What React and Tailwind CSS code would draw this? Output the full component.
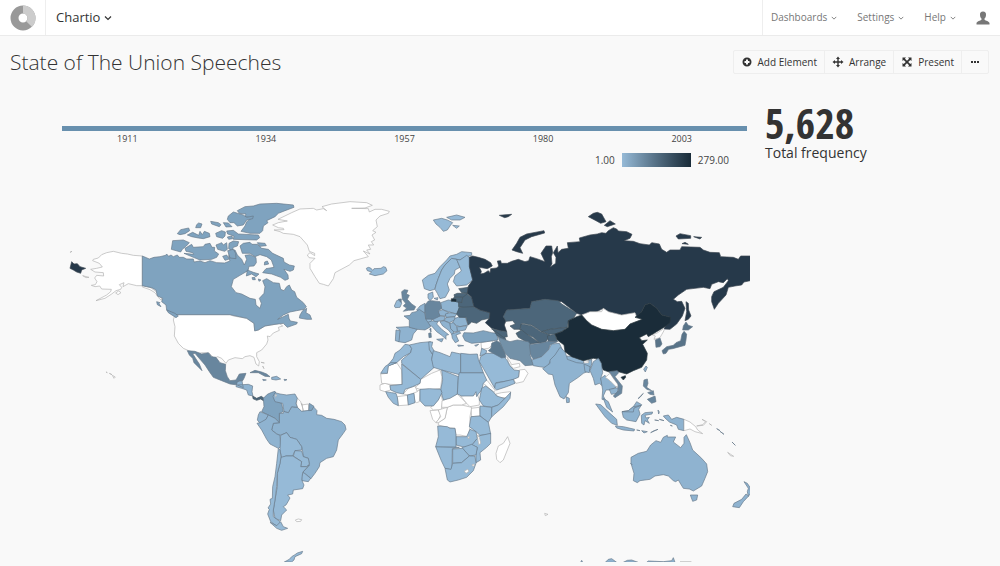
import React from "react";

const LIGHT = "#96bad7";
const SOFT = "#8fb3d0";
const MID = "#7fa3bf";
const STEEL = "#68869e";
const SLATE = "#4c667a";
const NAVY = "#26394a";
const INK = "#1a2c39";
const NONE = "#ffffff";

const borders = {
  [NONE]: "#b0b0b0",
  [NAVY]: "#3b4650",
  [INK]: "#2c3940",
  [SLATE]: "#44545f",
};

// Each region holds [fill, outline, outline, ...]; outlines are in thirds of a map unit from the origin.
const regions = [
  {
    origin: [50, 190],
    shapes: [
      [NONE,
        "277,198 250,196 232,192 215,190 190,184 170,188 155,194 145,204 130,208 128,212 148,220 157,231 140,235 122,238 135,246 160,248 161,258 140,256 134,264 141,275 136,284 124,286 135,290 149,288 155,297 184,298 182,305 170,315 138,332 165,325 185,312 198,302 212,298 215,292 208,284 222,278 219,290 235,281 260,287 277,287 300,292 315,302 330,315 337,330 330,328 315,308 300,299 277,291",
        "197,309 206,303 213,308 204,314", "98,257 117,262 108,263", "60,187 66,184", "168,546 172,548", "178,550 186,554", "187,556 196,561 192,565"],
      [NAVY, "65,215 72,222 82,221 90,230 107,235 95,240 92,250 80,246 70,240 60,235"],
    ],
  },
  {
    origin: [150, 190],
    shapes: [
      [NONE,
        "75,374 240,374 250,378 290,385 312,400 314,420 325,420 345,408 375,403 388,400 398,408 385,412 388,421 370,429 360,440 352,438 354,450 350,462 335,480 320,488 320,500 328,515 326,528 318,522 312,502 300,497 285,500 277,506 255,503 235,510 228,520 215,505 203,500 192,505 178,490 160,488 140,490 118,483 100,475 85,460 73,438 75,410 70,390",
        "368,105 385,98 412,93 384,88 425,68 450,57 490,55 500,60 520,56 530,62 516,50 545,42 600,35 650,38 667,46 645,54 605,55 655,56 658,66 675,58 695,58 718,64 715,70 690,78 678,90 682,110 668,122 678,127 666,135 674,150 664,155 671,165 655,165 662,178 650,180 660,192 640,183 655,200 612,212 598,225 555,248 550,266 535,288 520,283 508,280 495,260 480,235 480,220 495,205 477,203 472,195 480,188 494,197 494,190 478,184 472,165 450,140 430,133 400,130 390,125 372,120 402,119 400,115 385,113",
        "333,517 343,519", "338,528 342,536"],
      [MID,
        "-23,198 -2,207 12,202 30,200 47,196 50,192 56,199 63,195 70,200 82,195 88,202 100,202 110,207 130,207 132,216 150,213 165,218 180,212 200,218 224,219 240,213 236,200 240,180 255,180 262,195 275,208 283,225 290,208 285,196 300,194 318,203 319,218 312,228 297,229 294,242 270,256 250,268 244,290 258,308 275,312 300,325 316,328 318,345 330,355 334,340 328,325 342,310 345,290 338,272 350,266 370,278 388,280 392,298 402,302 410,290 418,285 425,300 434,305 440,322 460,338 469,350 462,358 440,362 420,366 400,375 383,388 400,380 415,373 417,385 421,393 442,397 440,402 412,412 400,400 385,402 375,403 345,408 325,420 314,423 312,400 290,385 240,374 75,374 60,365 50,360 48,345 35,335 38,325 22,318 18,300 5,293 -10,290 -23,287",
        "262,62 285,50 310,48 330,42 380,40 430,45 432,52 405,62 385,70 375,80 350,92 354,98 340,108 338,122 330,130 300,130 273,124 285,108 290,95 305,84 285,80 288,72 268,70",
        "235,78 250,66 280,75 290,82 310,78 308,86 290,90 280,105 262,108 252,98 240,98 232,88",
        "230,123 250,121 265,132 325,135 329,143 320,150 250,148 252,138 233,132",
        "197,130 215,122 226,126 225,138 218,145 200,140", "220,98 235,99 246,110 228,111",
        "182,94 205,98 213,104 208,110 185,102", "140,104 146,99 156,102 152,113 137,113",
        "82,131 92,119 116,114 119,122 105,131 90,134", "112,135 128,127 146,136 150,124 157,134 163,124 178,130 180,140 160,146 145,144 125,140",
        "68,152 100,150 118,158 109,168 97,178 92,186 64,178",
        "105,175 125,163 130,172 160,170 165,163 180,160 186,172 194,172 193,183 206,192 200,202 185,208 150,210 130,202 102,190 131,193 128,188 108,184",
        "198,165 208,161 215,158 220,165 230,158 232,178 224,184 203,178", "237,160 250,153 266,155 262,168 250,172 246,182 236,176",
        "233,182 250,178 257,190 258,206 240,204", "218,199 230,195 238,207 225,211", "232,141 246,138 248,146 236,148",
        "270,168 280,160 300,157 306,163 322,163 335,175 355,178 368,190 400,205 402,216 418,225 433,228 430,240 420,244 402,238 414,255 415,267 405,271 392,262 365,252 338,248 348,236 372,232 364,210 350,200 330,194 315,200 300,190 277,190",
        "322,158 345,160 349,167 330,169", "344,216 352,213 356,222 343,225", "292,240 310,247 327,252 318,260 305,252 289,258", "306,263 314,262 316,269 308,269", "325,267 333,270 327,274",
        "450,375 458,362 470,355 468,368 480,375 485,388 470,388 448,384",
        "50,360 75,370 85,378 78,383 55,368", "20,335 30,338 27,341 33,350 22,344"],
      [LIGHT, "649,235 655,232 662,234 668,241 672,236 693,235 700,230 707,232 711,242 700,252 675,257 658,252 665,246 652,242"],
    ],
  },
  {
    origin: [180, 350],
    shapes: [
      [STEEL,
        "22,2 45,4 65,12 85,8 95,20 108,22 120,38 137,43 136,62 142,80 150,92 168,90 178,72 198,70 192,85 188,92 176,93 172,105 150,102 125,92 100,82 88,65 75,45 55,22 45,10 38,11 50,30 58,42 66,62 57,53 42,38 38,25 28,15",
        "210,68 225,61 245,66 260,72 270,80 255,79 235,68"],
      [SLATE, "218,138 230,145 244,139 255,147 250,152 242,147 230,151 219,146"],
      [SOFT, "172,95 186,92 188,104 205,103 218,108 216,125 219,138 205,135 200,120 185,115 168,110", "172,105 188,104 190,113", "275,82 290,79 302,87 288,90 275,88", "248,88 259,90 250,92", "312,88 321,89 314,92"],
      [NONE, "350,142 362,155 365,165 385,162 387,182 365,184 355,178 350,165", "365,160 370,183", "346,510 355,507 365,509 362,514 350,515"],
      [SOFT,
        "298,218 280,220 275,240 290,252 300,256 320,248 330,262 350,268 365,290 368,305 370,320 385,325 388,345 380,355 368,367 385,378 392,387 405,370 418,350 420,338 440,325 460,320 470,300 475,270 490,250 498,238 495,225 485,215 462,208 440,205 425,196 410,194 411,182 400,170 395,180 365,184 352,172 335,170 325,188 312,184 310,190 298,190"],
      [MID, "250,145 262,133 275,127 285,124 288,130 280,138 285,153 305,160 310,185 298,190 298,218 285,205 265,195 245,185 252,170", "388,160 402,169 395,181 386,182"],
      [SOFT,
        "285,128 300,132 320,135 345,132 352,145 348,160 352,172 335,170 325,188 312,184 308,160 285,155 279,140",
        "240,185 265,195 258,210 240,220 232,210 235,195",
        "231,220 240,218 258,208 265,195 285,205 298,218 280,220 275,240 290,252 300,256 302,290 295,295 270,282 260,268 245,240"],
      [LIGHT,
        "302,256 320,248 330,262 350,268 365,290 365,300 345,302 338,318 318,318 305,324 300,300",
        "345,302 365,303 370,320 385,325 388,342 380,350 362,350 365,335 340,318",
        "370,367 392,385 385,395 366,392 365,380",
        "303,322 318,318 338,318 365,335 362,350 380,350 388,345 368,367 365,390 372,405 368,416 340,420 338,432 323,435 330,444 324,455 318,465 310,470 320,480 305,495 302,512 285,505 280,480 285,450 292,410 292,370 300,340",
        "295,295 300,300 303,320 300,340 292,370 290,410 285,450 280,480 280,500 300,515 305,530 290,528 272,515 263,492 268,478 264,474 272,462 270,448 277,445 278,410 285,380 290,340",
        "270,517 290,527 302,515 310,530 323,535 305,541 290,535",
        "313,636 328,628 335,620 345,614 352,609 368,604 365,611 345,620 342,630 335,636"],
      [NONE, "286,132 290,136 286,142"],
    ],
  },
  {
    origin: [370, 320],
    shapes: [
      [NONE,
        "32,162 52,160 55,137 80,128 95,150 95,195 60,193 35,190", "152,178 185,160 210,150 216,170 212,205 178,210 150,208 135,203 150,190",
        "340,190 343,180 352,182 376,212 370,216 350,198", "378,222 395,218 422,215 418,232 385,234", "303,265 328,262 330,288 305,290",
        "205,308 225,295 232,262 250,255 275,255 305,262 300,290 300,320 295,350 270,345 258,345 255,325 232,322 205,315",
        "182,262 205,240 212,218 218,245 215,262 215,270 190,270", "180,272 205,270 212,285 205,300 198,308 188,298", "205,270 232,262 225,295 205,308 198,308 212,290",
        "216,243 262,222 275,235 290,250 275,255 250,255 232,262 215,262", "272,228 322,222 328,240 328,255 300,260 290,250",
        "130,218 150,210 148,245 140,248 135,245", "82,230 112,226 115,255 85,257", "30,195 45,190 60,195 62,210 45,215 30,210", "100,222 115,205 135,198 142,215 115,225",
        "448,150 465,148 474,160 460,185 438,190 430,178 447,170", "412,112 425,134 448,130 450,140 430,145 415,128",
        "378,400 385,378 400,370 413,350 420,370 412,390 400,420 390,428 380,418", "333,68 365,62 372,72 355,85 335,88"],
      [LIGHT,
        "118,75 125,85 122,98 100,110 80,128 52,138 70,115 75,100 90,90 105,73", "80,128 55,138 52,160 32,160 45,140 62,128",
        "118,75 150,68 182,65 178,88 188,104 185,118 195,140 152,178 95,130 95,120 122,98 125,85",
        "95,132 152,178 150,190 128,200 105,208 100,222 80,218 62,210 60,197 97,193",
        "176,66 188,66 185,80 192,92 188,104 178,88",
        "190,92 210,98 220,102 240,110 245,96 272,102 272,165 215,150 190,142 185,118",
        "215,150 265,170 262,222 240,235 220,240 212,210 218,180",
        "268,158 340,158 350,180 340,190 335,210 325,222 320,230 318,215 310,228 275,228 262,222 265,172",
        "335,205 347,198 370,215 380,228 405,236 385,255 365,262 340,258 328,240", "422,217 420,235 400,260 370,286 364,292 365,262 385,255 405,235",
        "330,258 365,262 365,290 355,307 330,288", "303,290 330,288 355,307 362,342 330,346 318,335 298,320",
        "325,348 362,340 362,370 350,382 330,398 332,420 318,428 318,402 322,382 305,375 322,355",
        "258,350 290,350 300,328 318,335 322,355 305,375 285,382 258,375", "276,383 305,373 322,382 318,405 298,408",
        "248,387 278,385 298,408 275,428 248,430", "197,380 268,382 247,386 246,450 225,445 213,420",
        "225,445 243,448 248,430 275,428 298,408 315,408 318,430 310,452 290,472 265,480 240,486 232,480",
        "203,318 232,320 240,325 255,325 258,345 258,381 197,380 205,350",
        "150,208 178,206 212,208 216,218 205,240 190,258 165,258 150,242", "112,225 132,220 135,248 115,255", "47,215 65,218 78,220 82,232 85,257 70,250 55,232",
        "332,110 348,100 375,100 400,108 412,122 420,138 432,150 448,152 445,172 420,182 378,188 374,204 360,180 340,145 328,125",
        "376,190 400,185 430,178 435,190 410,200 380,210 374,205", "330,108 335,85 350,92 348,100"],
      [SOFT, "272,100 300,103 322,102 325,118 340,158 272,158"],
      [NONE, "283,453 293,448 297,454 288,460", "306,434 313,432 312,439 307,438", "293,352 298,349 297,357", "322,345 328,352 332,370 326,374"],
    ],
  },
  {
    origin: [360, 210],
    shapes: [
      [LIGHT,
        "220,30 245,25 262,30 278,38 272,45 262,60 250,64 240,52 228,42", "260,22 290,15 315,22 300,30 275,30", "278,46 298,48 290,55",
        "187,210 205,196 225,190 240,170 260,150 270,138 290,133 305,125 335,128 335,136 315,142 300,150 290,148 275,145 255,165 245,180 235,205 228,225 224,238 210,242 193,236",
        "228,225 235,205 245,180 255,165 275,145 290,148 300,172 285,180 283,192 270,205 262,222 268,240 256,262 240,266 232,250 225,238",
        "300,150 320,136 328,142 330,170 338,210 320,225 290,228 280,215 285,198 304,183 300,172 290,148",
        "204,252 218,246 220,262 210,272 204,264", "222,265 234,263 232,270", "103,288 110,272 122,268 125,280 120,292 106,293",
        "197,327 215,325 215,335 200,338"],
      [SOFT,
        "242,278 265,270 295,275 298,300 290,312 265,305 245,298", "170,300 180,288 195,280 195,308 180,305",
        "108,352 145,350 172,358 160,372 155,390 135,398 115,395 120,360", "108,360 120,362 117,395 106,392",
        "195,340 215,333 235,332 230,342 245,358 266,374 258,376 258,388 248,378 230,365 215,348", "230,388 250,386 245,396",
        "233,305 248,299 266,308 255,318 238,316", "215,326 240,318 256,320 252,331 225,335", "256,312 270,308 290,312 285,320 258,322",
        "252,332 258,323 285,320 285,330 268,338", "285,325 300,320 316,322 324,345 300,350 290,347 278,338", "290,350 300,350 322,347 316,360 292,364",
        "240,335 252,332 270,340 272,356 282,365 278,376 265,360 248,348", "270,340 280,338 290,350 292,364 282,366 272,356", "275,372 298,364 302,370 288,375 296,393 286,398 277,385",
        "293,405 311,407 295,409", "344,406 356,403 348,409"],
      [MID, "132,318 150,316 155,308 168,305 178,298 195,310 197,327 204,337 212,350 195,360 172,358 148,352 148,330", "312,368 340,369 370,362 395,368 410,370 414,390 380,395 355,398 335,400 315,392 308,378"],
      [STEEL, "125,245 133,239 144,241 139,252 148,256 142,268 155,282 167,290 162,300 145,301 130,304 140,294 130,288 137,280 127,268", "115,268 124,267 122,277", "195,285 205,273 215,272 240,275 245,295 235,304 240,318 220,328 197,327 195,305", "206,370 213,368 214,382 207,383", "209,357 213,355 213,366"],
      [SLATE,
        "296,236 325,232 322,250 305,248", "282,254 292,250 322,250 320,262 284,262", "282,262 308,262 306,278 290,276 276,270",
        "308,262 322,252 336,264 342,290 320,294 296,290 296,276 306,278", "298,292 340,290 360,300 390,308 388,325 365,330 350,340 335,336 325,345 318,322 298,322 290,312",
        "400,360 422,366 432,376 438,390 425,388 412,378"],
      [INK, "274,266 288,268 288,274 274,274"],
    ],
  },
  {
    origin: [470, 200],
    shapes: [
      [NAVY,
        "-2,172 8,168 25,172 45,178 62,188 67,198 52,206 28,202 34,214 32,222 42,220 55,212 60,218 62,206 80,204 86,198 82,183 92,182 94,190 112,190 125,184 145,178 165,185 176,182 180,170 200,176 225,185 213,160 228,138 245,138 248,158 244,170 246,192 240,202 257,190 258,172 250,158 262,138 264,158 275,148 295,145 292,128 330,125 328,114 360,105 382,102 395,98 408,100 415,92 430,83 440,87 445,93 470,95 486,103 480,115 462,122 490,124 510,131 538,135 545,128 568,132 575,148 590,157 600,150 630,150 635,140 690,142 700,150 720,157 748,158 752,170 790,172 805,178 812,168 841,168 841,242 822,246 815,255 795,258 775,262 768,285 745,310 733,328 725,305 725,290 732,275 760,262 775,242 772,236 760,248 745,245 725,253 720,266 700,262 650,268 625,285 610,298 622,305 635,304 645,325 637,348 620,372 600,388 582,387 600,352 575,345 560,325 540,310 525,315 515,335 500,350 495,340 460,345 430,345 400,325 380,335 335,345 320,340 275,305 225,298 185,305 180,325 110,330 100,350 108,362 103,375 110,395 90,392 65,385 46,368 58,355 60,338 30,330 12,320 5,292 -8,280 -5,258 8,240 -2,200",
        "126,150 140,130 150,112 170,102 222,92 224,99 185,110 165,120 150,143 158,160 140,155", "355,50 370,40 382,37 395,42 408,65 392,70 378,62", "403,76 420,62 436,72 412,80", "88,46 108,44 125,43 115,50 104,53",
        "618,108 630,101 662,107 662,115 625,117", "671,110 695,112 690,117", "636,131 645,127 655,133", "648,305 655,310 656,330 663,348 655,358 645,362 650,335"],
      [SLATE,
        "100,350 110,330 180,325 185,305 225,298 265,302 275,312 320,340 310,355 295,362 292,382 240,388 215,395 185,375 155,370 150,388 132,388 120,378 136,372 128,362 108,364",
        "150,390 153,372 185,377 212,395 240,405 228,425 210,430 190,412 165,400 155,390", "138,400 155,390 170,402 208,428 180,432 145,412",
        "215,395 240,388 292,382 275,395 255,402 236,403", "232,408 255,402 262,425 235,425", "65,387 90,392 110,395 112,410 100,412 85,400"],
      ["#7391a8", "85,412 100,418 120,425 142,420 175,425 187,442 180,465 190,495 165,497 150,482 120,475 105,460 95,440"],
      ["#5d798f", "65,430 80,422 90,428 105,460 108,472 95,474 55,452 63,445"],
      [STEEL, "178,434 210,430 235,424 262,425 240,435 235,450 215,470 190,478 182,465"],
      [SOFT,
        "190,497 185,480 215,470 235,450 245,432 268,430 278,450 255,470 240,485 232,502 220,502",
        "218,506 240,490 240,480 255,465 270,442 285,455 290,470 320,485 342,488 365,478 365,492 358,512 340,520 325,532 298,550 295,578 282,597 270,590 255,555 248,524 235,522",
        "290,468 305,470 342,482 340,490 320,488 292,478", "342,492 360,500 358,518 345,515", "521,508 528,498 532,502 526,516", "288,590 298,595 298,607 290,608"],
      [NONE, "335,345 360,335 395,335 400,325 415,335 455,345 495,338 500,350 517,358 480,372 465,388 430,392 395,388 365,375 350,362", "342,482 356,484 355,489 342,489", "546,404 560,400 578,388 582,392 575,404 570,413 552,418 556,408"],
      [INK,
        "255,402 275,395 295,382 295,362 320,350 335,345 350,362 365,375 395,388 430,392 465,388 480,372 517,358 495,352 515,335 525,315 540,310 560,325 575,345 602,352 600,368 585,380 560,395 535,410 530,402 508,413 516,422 532,420 518,433 532,460 530,480 515,502 490,512 470,522 462,520 445,515 420,517 400,510 390,495 388,478 370,475 340,482 305,470 285,455 282,435 262,420",
        "453,532 466,527 467,532 460,540"],
      ["#587388", "556,420 570,414 576,432 570,440 558,442", "576,452 590,440 610,436 618,428 632,422 636,403 642,394 650,402 648,420 645,436 630,440 608,446 596,448 588,460 580,462", "640,378 648,366 655,376 668,380 655,390 638,390"],
    ],
  },
  {
    origin: [530, 330],
    shapes: [
      [SOFT,
        "180,122 190,95 205,85 214,100 218,128 212,145 220,170 208,160 195,165 190,145", "212,145 225,136 240,152 258,165 258,172 240,180 228,180 220,198 226,210 216,208 218,180",
        "238,178 265,173 262,190 244,193", "220,205 235,215 245,240 248,246 230,232", "197,222 212,224 240,250 260,268 262,286 245,280 225,260 210,240",
        "256,288 280,290 314,298 312,303 280,300 260,294", "276,245 295,242 310,230 320,215 335,224 326,238 330,252 318,275 290,270 280,262", "276,245 295,242 310,230 334,226 312,234 310,246", "334,256 345,248 368,246 366,252 345,256 348,264 358,262 352,270 358,280 345,272 342,285 335,280",
        "384,240 388,246 386,252", "374,270 386,272", "388,268 402,272", "362,308 372,302 384,298", "335,302 352,305 342,309", "320,300 330,302",
        "400,258 415,255 425,268 440,262 462,268 462,302 445,298 440,285 418,276 405,264", "421,286 427,288",
        "303,382 325,370 350,364 362,345 378,332 392,337 400,322 412,316 412,321 437,321 430,336 452,353 462,340 462,322 469,314 480,338 488,360 515,385 530,402 533,425 525,445 515,468 490,483 478,477 460,475 452,462 445,450 437,455 430,452 415,438 400,434 375,438 360,448 330,452 322,458 310,452 312,430 303,400",
        "481,495 503,495 500,510 488,514", "642,455 652,460 660,472 662,490 655,499 652,485 655,475", "648,492 656,498 640,515 628,533 608,530 612,520 635,508",
        "226,697 235,688 245,686 260,697", "280,697 292,691 305,690 324,697", "350,697 355,693 400,695 425,692 430,683 435,697", "152,697 155,691 158,697"],
      [NONE, "226,142 240,130 252,148 267,168 258,170 240,152", "462,268 480,276 497,290 503,300 518,311 495,305 480,297 462,302", "500,288 518,284 527,275 516,268 530,275 520,286", "593,367 611,379 601,377", "44,550 54,553 46,557", "538,281 545,286", "450,696 484,696"],
      [STEEL, "238,125 262,122 266,128 255,140 277,168 275,190 255,203 250,198 265,182 264,162 248,140", "342,150 352,147 354,160 350,172 365,182 350,178 340,168", "353,188 370,182 372,195 360,193", "352,208 375,198 378,215 365,220", "324,206 340,190 330,202", "560,296 570,302", "570,304 582,313", "606,336 616,346", "302,400 306,404"],
    ],
  },
];

function WorldMap() {
  return (
    <svg viewBox="62 190 688 372" className="block w-full" role="img" aria-label="Frequency by country">
      {regions.map(({ origin, shapes }) => (
        <g key={origin.join("-")} transform={`translate(${origin[0]} ${origin[1]}) scale(0.33333)`}>
          {shapes.map(([fill, ...outlines], i) => (
            <g key={i} fill={fill} stroke={borders[fill] ?? "#66798a"} strokeWidth="2" strokeLinejoin="round">
              {outlines.map((points) => (
                <polygon key={points} points={points} />
              ))}
            </g>
          ))}
        </g>
      ))}
    </svg>
  );
}

function Chevron({ className }) {
  return (
    <svg viewBox="0 0 8 6" className={className} fill="none" stroke="currentColor" strokeWidth="1.2" aria-hidden="true">
      <path d="M1 1.5 4 4.5 7 1.5" />
    </svg>
  );
}

function Logo() {
  return (
    <svg viewBox="0 0 26 26" className="size-[26px]" aria-hidden="true">
      <circle cx="13" cy="13" r="8.5" fill="none" stroke="#999999" strokeWidth="8" />
      <path d="M13 4.5A8.5 8.5 0 0 1 19 19" fill="none" stroke="#cccccc" strokeWidth="8" />
    </svg>
  );
}

const icons = {
  add: (
    <path fillRule="evenodd" d="M6 1.5a4.5 4.5 0 1 0 0 9 4.5 4.5 0 0 0 0-9ZM5 3.5h2V5h1.5v2H7v1.5H5V7H3.500V5H5Z" />
  ),
  arrange: (
    <path d="M6 .5 8 3H6.700v2.300H9V4l2.500 2L9 8V6.700H6.700V9H8l-2 2.500L4 9h1.300V6.700H3V8L.5 6 3 4v1.300h2.300V3H4Z" />
  ),
  present: (
    <path d="M1.500 1.500h3.500L3.900 2.700 6 4.800l2.100-2.100L7 1.500h3.500V5L9.300 3.900 7.200 6l2.100 2.100L10.500 7v3.500H7l1.100-1.200L6 7.200 3.900 9.300 5 10.500H1.500V7l1.200 1.100L4.800 6 2.700 3.900 1.500 5Z" />
  ),
};

function ToolButton({ icon, children }) {
  return (
    <button type="button" className="flex items-center gap-[5px] border-r border-[#eeeeee] px-[7px] text-[#333]">
      <svg viewBox="0 0 12 12" className="size-3" fill="currentColor" aria-hidden="true">{icons[icon]}</svg>
      {children}
    </button>
  );
}

function NavMenu({ children }) {
  return (
    <button type="button" className="flex items-center gap-1">
      {children}
      <Chevron className="size-1.5" />
    </button>
  );
}

export default function App() {
  return (
    <div className="min-h-screen bg-[#f9f9f9] font-['Open_Sans','Noto_Sans',sans-serif] text-[#444]">
      <header className="flex h-9 items-stretch border-b border-[#ebebeb] bg-white">
        <a href="#home" aria-label="Home" className="flex w-[46px] items-center justify-center border-r border-[#eeeeee]">
          <Logo />
        </a>
        <button type="button" className="flex items-center gap-1 px-2.5 text-[13px] text-[#333]">
          Chartio <Chevron className="h-1.5 w-2" />
        </button>
        <nav className="ml-auto flex items-center gap-5 border-l border-[#eeeeee] pr-2.5 pl-2 text-[10px] text-[#777]">
          <NavMenu>Dashboards</NavMenu>
          <NavMenu>Settings</NavMenu>
          <NavMenu>Help</NavMenu>
          <button type="button" aria-label="Account">
            <svg viewBox="0 0 14 14" className="size-3.5" fill="#777777" aria-hidden="true">
              <path d="M7 .5C4.800.5 3.800 2 4 4c.1 1.600.7 2.900 1.500 3.600v1.200C4.500 9.700.8 10.400.5 12v1.500h13V12c-.3-1.600-4-2.300-5-3.200V7.600C9.300 6.900 9.900 5.600 10 4 10.200 2 9.200.5 7 .5Z" />
            </svg>
          </button>
        </nav>
      </header>

      <div className="flex items-center justify-between pt-2.5 pr-[11px] pl-2.5">
        <h1 className="text-[21px] leading-8 font-light text-[#333]">State of The Union Speeches</h1>
        <div className="flex h-6 rounded-xs border border-[#eeeeee] text-[10px]">
          <ToolButton icon="add">Add Element</ToolButton>
          <ToolButton icon="arrange">Arrange</ToolButton>
          <ToolButton icon="present">Present</ToolButton>
          <button type="button" aria-label="More" className="flex items-center px-2">
            <svg viewBox="0 0 10 4" className="h-1 w-2.5" fill="#333333" aria-hidden="true">
              <path d="M1 1h2v2H1zM4 1h2v2H4zM7 1h2v2H7z" />
            </svg>
          </button>
        </div>
      </div>

      <main className="flex gap-[15px] pl-[62px]">
        <section className="min-w-0 flex-1 pt-12">
          <div className="pr-[3px]">
            <div className="h-[5px] bg-[#6890ae]" />
            <div className="-mx-1 grid grid-cols-5 pt-0.5 text-center text-[9px] leading-3">
              <span>1911</span>
              <span>1934</span>
              <span>1957</span>
              <span>1980</span>
              <span>2003</span>
            </div>
          </div>
          <div className="flex items-center justify-end gap-[7px] pt-2 pr-[21px] text-[10px] leading-[14px]">
            <span>1.00</span>
            <span className="h-3.5 w-[69px] bg-linear-to-r from-[#96bad7] to-[#1a2c39]" />
            <span>279.00</span>
          </div>
          <div className="pt-[23px]">
            <WorldMap />
          </div>
        </section>
        <aside className="w-[235px] pt-6 text-[#333]">
          <p className="font-['Open_Sans_Condensed','Roboto_Condensed','Liberation_Sans_Narrow','Open_Sans',sans-serif] text-[42px] leading-[42px] font-bold">5,628</p>
          <p className="text-[14px] leading-[18px]">Total frequency</p>
        </aside>
      </main>
    </div>
  );
}
